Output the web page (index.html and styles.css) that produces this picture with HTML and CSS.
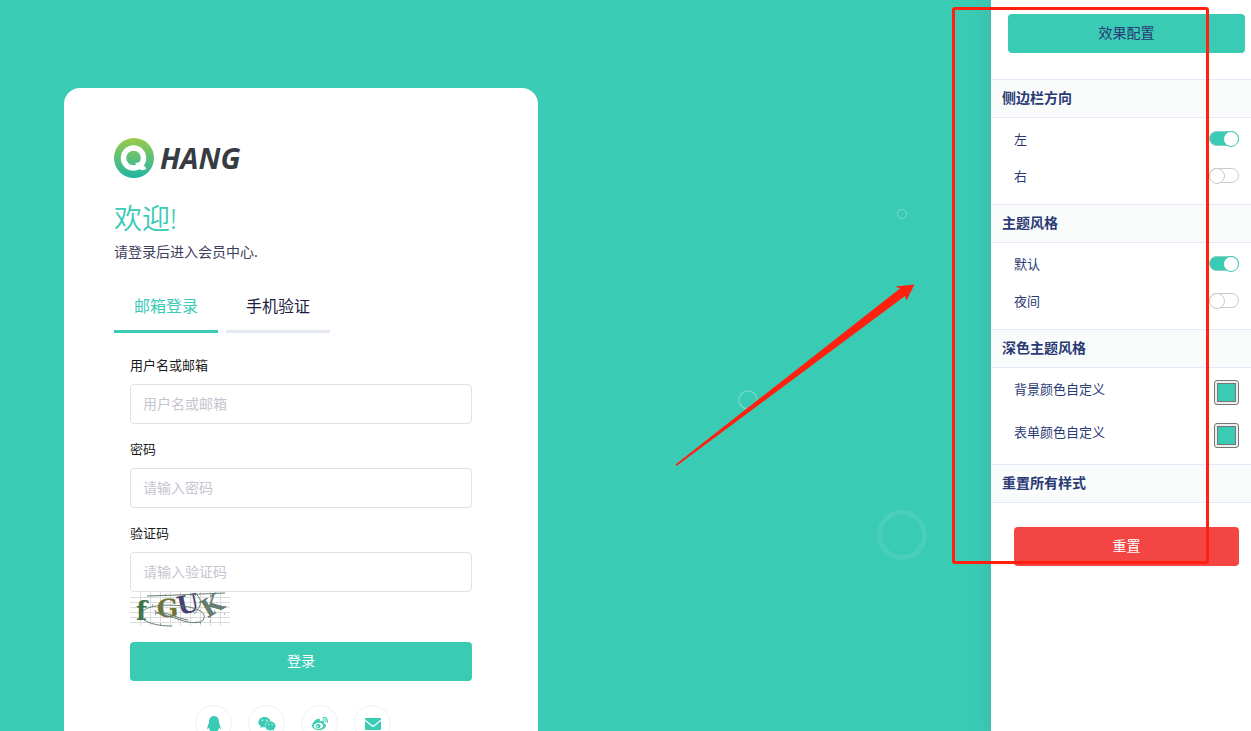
FILE: index.html
```html
<!DOCTYPE html>
<html lang="zh-CN">
<head>
<meta charset="utf-8">
<meta name="viewport" content="width=device-width, initial-scale=1">
<title>登录</title>
<link rel="stylesheet" href="styles.css">
</head>
<body>
<div class="page">
  <main class="stage">
    <section class="card">
      <div class="logo">
        <svg class="logo-mark" viewBox="0 0 40 40" aria-hidden="true">
          <defs><linearGradient id="lg" x1="0" y1="0" x2="0" y2="1"><stop offset="0" stop-color="#9bcb48"/><stop offset="1" stop-color="#20b5a5"/></linearGradient></defs>
          <circle cx="20" cy="20" r="20" fill="url(#lg)"/>
          <circle cx="19.500" cy="20" r="10" fill="none" stroke="#fff" stroke-width="5.500"/>
          <path d="M21 25l6-1 5.500 6.500c-2 2-5 2-6.500 1z" fill="#fff"/>
        </svg>
        <span class="logo-text">HANG</span>
      </div>
      <h1 class="title">欢迎!</h1>
      <p class="subtitle">请登录后进入会员中心.</p>
      <div class="tabs">
        <button type="button" class="tab tab-active">邮箱登录</button>
        <button type="button" class="tab">手机验证</button>
      </div>
      <form class="form">
        <div class="field">
          <label for="user">用户名或邮箱</label>
          <input id="user" type="text" placeholder="用户名或邮箱">
        </div>
        <div class="field">
          <label for="pass">密码</label>
          <input id="pass" type="password" placeholder="请输入密码">
        </div>
        <div class="field field-code">
          <label for="code">验证码</label>
          <input id="code" type="text" placeholder="请输入验证码">
        </div>
        <svg class="captcha" viewBox="0 0 100 35" role="img" aria-label="验证码图片">
          <path d="M10.500 0v34M20.500 0v34M30.500 0v34M40.500 0v34M50.500 0v34M60.500 0v34M70.500 0v34M80.500 0v34M90.500 0v34M0 5.500h100M0 10.500h100M0 15.500h100M0 20.500h100M0 25.500h100M0 30.500h100" stroke="#dcdcdc" fill="none"/>
          <g class="captcha-letters">
            <text x="6" y="28" font-size="26" fill="#3d7244">f</text>
            <text x="27" y="25" font-size="25" fill="#6e7532" transform="rotate(-4 38 20)">G</text>
            <text x="47" y="21" font-size="25" fill="#483e71" transform="rotate(-12 58 12)">U</text>
            <text x="71" y="22" font-size="25" fill="#657d6f" transform="rotate(-31 82 13)">K</text>
          </g>
          <path d="M17 4l30-1 48-2M42 34c-18 0-32-5-31-12 3-9 25-10 42-8 15 2 25 7 20 14-5 5-18 2-25-1-12-4-22-4-23-9M25 21c16-1 20 5 33 7M67 3c8 8 0 15-3 19" stroke="#657d6f" fill="none"/>
          <path d="M12 10h1m9 3h1m2 9h1m9-19h1m13 1h1m15-1h1m9 10h1m8 6h1m-5 6h1m13-3h1M30 32h1m22-16h1m12 14h1m3 1h1m-23-3h1m31 1h1" stroke="#56735f" fill="none"/>
        </svg>
        <button type="submit" class="btn-login">登录</button>
      </form>
      <div class="social">
        <a href="#" aria-label="QQ"><svg viewBox="0 0 448 512"><path d="M433.754 420.445c-11.526 1.393-44.860-52.741-44.860-52.741 0 31.345-16.136 72.247-51.051 101.786 16.842 5.192 54.843 19.167 45.803 34.421-7.316 12.343-125.510 7.881-159.632 4.037-34.122 3.844-152.316 8.306-159.632-4.037-9.045-15.250 28.918-29.214 45.783-34.415-34.920-29.539-51.059-70.445-51.059-101.792 0 0-33.334 54.134-44.859 52.741-5.370-.650-12.424-29.644 9.347-99.704 10.261-33.024 21.995-60.478 40.144-105.779C60.683 98.063 108.982.006 224 0c113.737.006 163.156 96.133 160.264 214.963 18.118 45.223 29.912 72.850 40.144 105.778 21.768 70.055 14.716 99.053 9.346 99.704z"/></svg></a>
        <a href="#" aria-label="微信"><svg viewBox="0 0 576 512"><path d="M385.200 167.600c6.400 0 12.600.300 18.800 1.100C387.400 90.300 303.300 32 207.700 32 100.500 32 13 104.800 13 197.400c0 53.400 29.300 97.500 77.900 131.600l-19.300 58.600 68-34.100c24.400 4.800 43.800 9.700 68.200 9.700 6.200 0 12.100-.300 18.300-.800-4-12.900-6.200-26.600-6.200-40.800-.100-84.900 72.900-154 165.300-154zm-104.500-52.900c14.500 0 24.200 9.700 24.200 24.400 0 14.500-9.700 24.200-24.200 24.200-14.800 0-29.300-9.700-29.300-24.200.100-14.700 14.600-24.400 29.300-24.400zm-136.400 48.600c-14.500 0-29.300-9.700-29.300-24.200 0-14.800 14.800-24.400 29.300-24.400 14.800 0 24.400 9.700 24.400 24.400 0 14.600-9.600 24.200-24.400 24.200zM563 319.400c0-77.900-77.900-141.300-165.400-141.300-92.700 0-165.400 63.400-165.400 141.300S305 460.700 397.600 460.700c19.300 0 38.900-5.100 58.600-9.900l53.400 29.300-14.800-48.600C534 402.100 563 363.200 563 319.400zm-219.100-24.500c-9.700 0-19.300-9.700-19.300-19.600 0-9.700 9.700-19.300 19.300-19.300 14.800 0 24.400 9.700 24.400 19.300 0 10-9.700 19.600-24.400 19.600zm107.100 0c-9.700 0-19.300-9.700-19.300-19.600 0-9.700 9.700-19.300 19.300-19.300 14.500 0 24.400 9.700 24.400 19.300.100 10-9.900 19.600-24.400 19.600z"/></svg></a>
        <a href="#" aria-label="微博"><svg viewBox="0 0 512 512"><path d="M407 177.600c7.600-24-13.400-46.800-37.400-41.700-22 4.800-28.800-28.100-7.100-32.800 50.100-10.900 92.300 37.100 76.500 84.800-6.800 21.200-38.800 10.800-32-10.300zM214.800 446.700C108.500 446.700 0 395.300 0 310.400c0-44.300 28-95.400 76.300-143.700C176 67 279.500 65.800 249.900 161c-4 13.100 12.300 5.700 12.300 6 79.500-33.600 140.500-16.800 114 51.400-3.700 9.400 1.100 10.900 8.300 13.100 135.700 42.300 34.800 215.200-169.700 215.200zm143.700-146.300c-5.400-55.700-78.500-94-163.400-85.700-84.800 8.600-148.800 60.300-143.400 116s78.500 94 163.400 85.700c84.800-8.600 148.800-60.300 143.400-116zM347.900 35.100c-25.900 5.600-16.800 43.700 8.300 38.300 72.300-15.200 134.800 52.800 111.700 124-7.400 24.200 29.100 37 37.400 12 31.900-99.800-55.100-195.900-157.400-174.300zm-78.500 311c-17.100 38.800-66.800 60-109.100 46.300-40.800-13.100-58-53.400-40.300-89.700 17.700-35.400 63.100-55.400 103.400-45.100 42 10.800 63.100 50.200 46 88.500zm-86.300-30c-12.900-5.400-30 .300-38 12.900-8.300 12.900-4.300 28 8.600 34 13.100 6 30.800.300 39.100-12.900 8-13.100 3.700-28.300-9.700-34zm32.600-13.400c-5.100-1.700-11.400.600-14.300 5.400-2.900 5.100-1.400 10.600 3.700 12.900 5.100 2 11.700-.300 14.600-5.400 2.800-5.200 1.100-10.900-4-12.900z"/></svg></a>
        <a href="#" aria-label="邮箱"><svg viewBox="0 0 16 16"><path d="M1 2h14q1 0 1 1v.5L9 9Q8 9.700 7 9L0 3.500V3Q0 2 1 2zM0 5l6.500 5.200q1.500 1 3 0L16 5v8q0 1-1 1H1Q0 14 0 13z"/></svg></a>
      </div>
    </section>
    <svg class="bubbles" viewBox="0 0 991 731" aria-hidden="true">
      <circle cx="902" cy="214" r="4.500" stroke-width="1" stroke-opacity=".3"/>
      <circle cx="748" cy="400" r="9" stroke-width="1.500" stroke-opacity=".25"/>
      <circle cx="902" cy="535" r="22.500" stroke-width="5" stroke-opacity=".08"/>
    </svg>
  </main>

  <aside class="panel">
    <div class="panel-head"><button type="button" class="btn-config">效果配置</button></div>
    <h2 class="group-title">侧边栏方向</h2>
    <div class="group">
      <div class="row"><label for="left">左</label><input id="left" class="switch" type="checkbox" checked></div>
      <div class="row"><label for="right">右</label><input id="right" class="switch" type="checkbox"></div>
    </div>
    <h2 class="group-title">主题风格</h2>
    <div class="group">
      <div class="row"><label for="light">默认</label><input id="light" class="switch" type="checkbox" checked></div>
      <div class="row"><label for="night">夜间</label><input id="night" class="switch" type="checkbox"></div>
    </div>
    <h2 class="group-title">深色主题风格</h2>
    <div class="group group-colors">
      <div class="row"><label for="bgc">背景颜色自定义</label><input id="bgc" class="swatch" type="color" value="#3acbb5"></div>
      <div class="row"><label for="formc">表单颜色自定义</label><input id="formc" class="swatch" type="color" value="#3acbb5"></div>
    </div>
    <h2 class="group-title">重置所有样式</h2>
    <div class="panel-foot"><button type="button" class="btn-reset">重置</button></div>
  </aside>

  <svg class="marks" width="1251" height="731" viewBox="0 0 1251 731" aria-hidden="true">
    <rect x="953.500" y="8.500" width="254" height="554" rx="1.500" fill="none" stroke="#ff2010" stroke-width="3"/>
    <path d="M914.500 284.500L895.500 286.500 900 288.500 675.500 464.500 676.500 466 905 296 906.500 300.500z" fill="#ff2010"/>
  </svg>
</div>
</body>
</html>
```
FILE: styles.css
```css
* { box-sizing: border-box; }

body {
  margin: 0;
  overflow: hidden;
  font-family: "Noto Sans", "Noto Sans CJK SC", sans-serif;
  font-size: 14px;
  line-height: 20px;
  color: #24244a;
}

button, input { font: inherit; }
button { border: 0; cursor: pointer; }

.page {
  position: relative;
  display: flex;
  height: 100vh;
  overflow: hidden;
}

.stage {
  position: relative;
  flex: 1;
  display: grid;
  grid-template-columns: 11fr 9fr;
  align-items: start;
  padding: 88px 65px 0 64px;
  background: #3acbb5;
}

.card {
  padding: 50px;
  border-radius: 16px;
  background: #fff;
}

.bubbles {
  position: absolute;
  top: 0;
  left: 0;
  width: 100%;
  fill: none;
  stroke: #fff;
  pointer-events: none;
}

.logo {
  display: flex;
  align-items: center;
  gap: 6px;
  height: 40px;
}
.logo-mark { width: 40px; height: 40px; }
.logo-text {
  font: italic 700 29px/40px "Open Sans", sans-serif;
  color: #363c42;
}

.title {
  margin: 20px 0 0;
  font-size: 28px;
  font-weight: 350;
  line-height: 40px;
  color: #3acbb5;
}
.subtitle { margin: 4px 0 0; color: #3d3d5c; }

.tabs { display: flex; gap: 8px; margin-top: 20px; }
.tab {
  width: 104px;
  padding: 12px 0;
  border-bottom: 3px solid #e4e9f0;
  background: none;
  font-size: 16px;
  line-height: 24px;
  color: #1d1d42;
}
.tab-active { border-color: #3acbb5; color: #3acbb5; }

.form {
  display: flex;
  flex-direction: column;
  padding: 23px 16px 24px;
}
.field {
  display: flex;
  flex-direction: column;
  gap: 8px;
  margin-bottom: 16px;
}
.field-code { margin-bottom: 0; }
.field label { font-size: 13px; line-height: 18px; padding-bottom: 2px; color: #1c1c1c; }
.field input {
  width: 100%;
  height: 40px;
  padding: 0 12px 2px;
  border: 1px solid #e2e2e4;
  border-radius: 4px;
  background: #fff;
}
.field input::placeholder { color: #c6c5cf; opacity: 1; }

.captcha { width: 100px; height: 35px; overflow: visible; }
.captcha-letters { font-family: "DejaVu Serif", serif; font-weight: bold; }

.btn-login, .btn-config, .btn-reset {
  height: 39px;
  padding: 0 0 2px;
  border-radius: 4px;
  background: #3acbb5;
  color: #fff;
}
.btn-login { margin-top: 15px; }

.social { display: flex; justify-content: center; gap: 16px; padding-right: 16px; }
.social a {
  display: flex;
  align-items: center;
  justify-content: center;
  width: 37px;
  height: 37px;
  border: 1px solid #efeff8;
  border-radius: 50%;
}
.social svg { height: 16px; fill: #3acbb5; }

.panel {
  position: relative;
  flex: 0 0 260px;
  padding-left: 1px;
  background: #fff;
  box-shadow: 0 0 16px rgba(89, 102, 122, .25);
  color: #293a75;
}
.panel-head { padding: 14px 6px 26px 16px; }
.btn-config, .btn-reset { display: block; width: 100%; }
.btn-config { color: #293a75; }
.group-title {
  margin: 0;
  padding: 8px 10px 9px;
  border: solid #e6e8f8;
  border-width: 1px 0;
  background: #fafcfc;
  font-size: 14px;
  font-weight: 700;
}
.group { padding: 2px 12px 10px 22px; }
.group .row {
  display: flex;
  align-items: center;
  justify-content: space-between;
  height: 37px;
  font-size: 13px;
}
.group-colors { padding: 3px 12px 7px 22px; }
.group-colors .row { height: 43px; }
.group-colors label { padding-bottom: 8px; }

.switch {
  appearance: none;
  position: relative;
  width: 30px;
  height: 15px;
  margin: 0;
  border: 1px solid #c9c9c9;
  border-radius: 8px;
}
.switch::before {
  content: "";
  position: absolute;
  top: -1px;
  left: -1px;
  width: 16px;
  height: 16px;
  border: 1px solid #c9c9c9;
  border-radius: 50%;
  background: #fff;
  box-sizing: border-box;
}
.switch:checked { background: #3acbb5; border-color: #8ccfc4; }
.switch:checked::before { left: 13px; border-color: #3acbb5; }

.swatch {
  appearance: none;
  width: 25px;
  height: 25px;
  padding: 2px;
  border: 1px solid #767676;
  border-radius: 3px;
  background: #efefef;
}
.swatch::-webkit-color-swatch-wrapper { padding: 0; }
.swatch::-webkit-color-swatch { border: 1px solid #777; border-radius: 0; }

.panel-foot { padding: 24px 12px 24px 22px; }
.btn-reset { background: #f44545; }

.marks {
  position: absolute;
  top: 0;
  left: 0;
  pointer-events: none;
}
```
